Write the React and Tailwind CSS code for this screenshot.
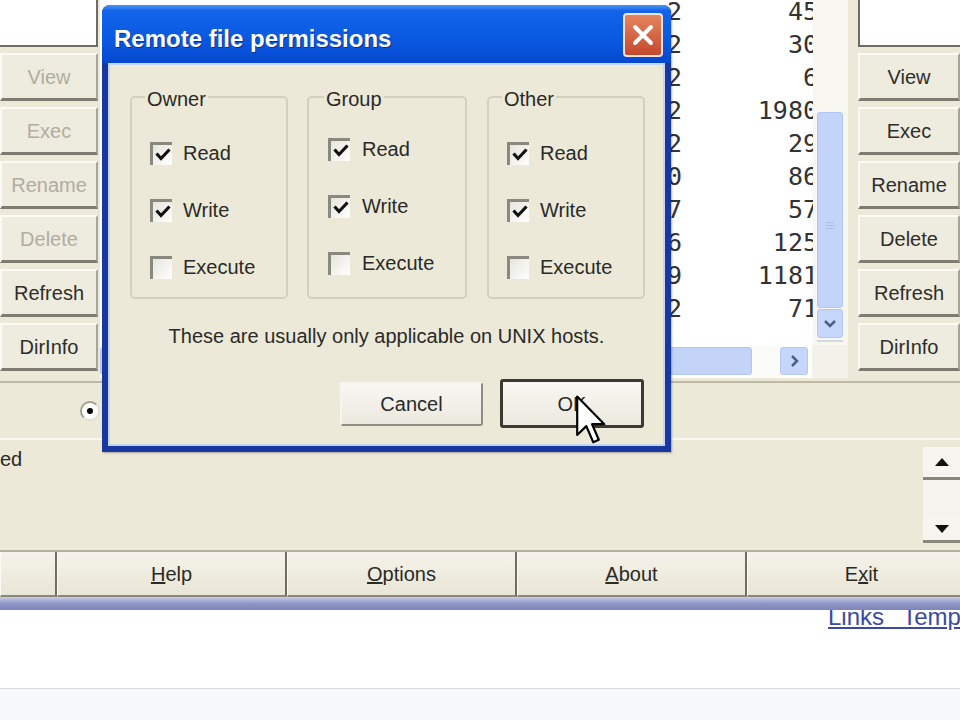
import React from "react";

function SideBtn({ label, disabled }) {
  return (
    <div
      className={
        "h-[48px] flex items-center justify-center bg-[#eeebdf] border-t-2 border-l-2 border-t-[#fbfaf4] border-l-[#fbfaf4] border-b-[3px] border-r-2 border-b-[#7e7c71] border-r-[#a7a598] text-[20px] " +
        (disabled ? "text-[#b1ae9f]" : "text-[#2e2e2a]")
      }
    >
      {label}
    </div>
  );
}

function Check({ checked }) {
  return (
    <div className="w-[22px] h-[23px] shrink-0 bg-linear-to-br from-[#e6e5dc] to-white border-t-[3px] border-l-[3px] border-t-[#8a897f] border-l-[#8a897f] flex items-center justify-center">
      {checked && (
        <svg width="16" height="14" viewBox="0 0 16 14">
          <path d="M1.5 5.5 L6 10.5 L14.5 1.5" fill="none" stroke="#111" strokeWidth="3.2" />
        </svg>
      )}
    </div>
  );
}

function Group({ title, pt, pl, gap, lm }) {
  const items = [
    ["Read", true],
    ["Write", true],
    ["Execute", false],
  ];
  return (
    <fieldset className="h-[214px] border-2 border-[#d3d0bf] rounded-[5px] p-0 m-0">
      <legend className={"px-[2px] text-[20px] leading-[24px] text-[#2a2a28] translate-y-[2px] " + lm}>{title}</legend>
      <div className={"flex flex-col gap-[33px] " + pt + " " + pl}>
        {items.map(([t, c]) => (
          <div key={t} className={"flex items-center h-[24px] " + gap}>
            <Check checked={c} />
            <span className="text-[20px] leading-[24px] text-[#2a2a28]">{t}</span>
          </div>
        ))}
      </div>
    </fieldset>
  );
}

const rows = [
  ["2", "45"],
  ["2", "30"],
  ["2", "6"],
  ["2", "1980"],
  ["2", "29"],
  ["0", "86"],
  ["7", "57"],
  ["6", "125"],
  ["9", "1181"],
  ["2", "71"],
  ["", ""],
  ["", ""],
];

function BarBtn({ w, children }) {
  return (
    <div
      className={
        "h-full shrink-0 flex items-center justify-center bg-linear-to-b from-[#f5f3ea] to-[#e9e6d6] border-r-2 border-r-[#6f6d63] border-b-2 border-b-[#8a887c] border-l border-l-[#fbfaf3] text-[20px] text-[#2a2a28] " +
        w
      }
    >
      {children}
    </div>
  );
}

export default function App() {
  return (
    <div className="relative w-[960px] h-[720px] overflow-hidden bg-[#ece9d8] font-['Liberation_Sans',Arial,sans-serif]">
      {/* top region */}
      <div className="flex h-[381px] items-start">
        {/* left column */}
        <div className="w-[98px] shrink-0 flex flex-col gap-[6px]">
          <div className="h-[47px] bg-white border-b-2 border-r-2 border-[#6f6d63]" />
          <SideBtn label="View" disabled />
          <SideBtn label="Exec" disabled />
          <SideBtn label="Rename" disabled />
          <SideBtn label="Delete" disabled />
          <SideBtn label="Refresh" />
          <SideBtn label="DirInfo" />
        </div>

        {/* file list */}
        <div className="ml-[2px] w-[748px] h-[378px] flex flex-col bg-[#f3f2ea]">
          <div className="flex h-[345px]">
            <div className="flex-1 bg-white overflow-hidden">
              <div className="mt-[-5px] font-['DejaVu_Sans_Mono',monospace] text-[25px] text-[#333] translate-x-[5px]">
                {rows.map(([a, b], i) => (
                  <div key={i} className="flex h-[33px] leading-[33px]">
                    <div className="w-[577px] shrink-0 text-right">{a}</div>
                    <div className="flex-1 text-right">{b}</div>
                  </div>
                ))}
              </div>
            </div>
            <div className="w-[35px] shrink-0 flex flex-col pl-[4px] pr-[5px] bg-[#f7f6f1]">
              <div className="h-[112px]" />
              <div className="h-[196px] rounded-[3px] bg-[#c3d4f8] border border-[#b3c6f1] flex items-center justify-center">
                <div className="flex flex-col gap-[2px] mt-[30px]">
                  <div className="w-[8px] h-px bg-[#a9bde8]" />
                  <div className="w-[8px] h-px bg-[#a9bde8]" />
                  <div className="w-[8px] h-px bg-[#a9bde8]" />
                </div>
              </div>
              <div className="h-[29px] mt-[1px] rounded-[3px] bg-[#c6d7fb] border border-[#b5c8f2] flex items-center justify-center">
                <svg width="14" height="9" viewBox="0 0 14 9">
                  <path d="M2 2 L7 7 L12 2" fill="none" stroke="#4b5f8a" strokeWidth="2.5" />
                </svg>
              </div>
              <div className="h-[2px] mt-[2px] bg-[#d6d9e0]" />
            </div>
          </div>
          <div className="flex h-[33px] items-stretch">
            <div className="w-[652px] shrink-0 bg-white pt-[2px] pb-[3px]">
              <div className="h-full rounded-[3px] bg-[#c3d4f8] border border-[#b3c6f1]" />
            </div>
            <div className="w-[28px] shrink-0 bg-[#fbfbf8]" />
            <div className="w-[28px] shrink-0 bg-white pt-[2px] pb-[3px]">
              <div className="h-full rounded-[3px] bg-[#c6d7fb] border border-[#b5c8f2] flex items-center justify-center">
                <svg width="9" height="14" viewBox="0 0 9 14">
                  <path d="M2 2 L7 7 L2 12" fill="none" stroke="#4b5f8a" strokeWidth="2.5" />
                </svg>
              </div>
            </div>
            <div className="w-[4px] shrink-0 bg-white" />
            <div className="flex-1 bg-[#f3f2ea]" />
          </div>
        </div>

        {/* right column */}
        <div className="ml-[10px] w-[102px] shrink-0 flex flex-col gap-[6px]">
          <div className="h-[47px] bg-white border-b-2 border-l-2 border-[#6f6d63]" />
          <SideBtn label="View" />
          <SideBtn label="Exec" />
          <SideBtn label="Rename" />
          <SideBtn label="Delete" />
          <SideBtn label="Refresh" />
          <SideBtn label="DirInfo" />
        </div>
      </div>

      {/* mode row */}
      <div className="h-[59px] flex items-center border-t-2 border-t-[#bcb9a9] border-b-2 border-b-[#f8f7f1]">
        <div className="ml-[80px] w-[20px] h-[20px] rounded-full bg-white border-2 border-t-[#a09e92] border-l-[#a09e92] border-r-[#e2e0d6] border-b-[#e2e0d6] flex items-center justify-center">
          <div className="w-[6px] h-[6px] rounded-full bg-black" />
        </div>
      </div>

      {/* log */}
      <div className="h-[110px] flex">
        <div className="flex-1 pt-[6px] text-[20px] leading-[26px] text-[#2a2a28]">ed</div>
        <div className="w-[37px] flex flex-col pt-[7px]">
          <div className="h-[33px] bg-[#f6f5ef] border-b-[3px] border-b-[#8a887c] flex items-center justify-center">
            <svg width="14" height="8" viewBox="0 0 14 8">
              <path d="M7 0 L14 8 L0 8 Z" fill="#111" />
            </svg>
          </div>
          <div className="h-[37px] bg-[#f4f3ed]" />
          <div className="h-[26px] bg-[#f6f5ef] border-b-[3px] border-b-[#8a887c] flex items-center justify-center">
            <svg width="14" height="8" viewBox="0 0 14 8">
              <path d="M0 0 L14 0 L7 8 Z" fill="#111" />
            </svg>
          </div>
        </div>
      </div>

      {/* bottom button bar */}
      <div className="h-[47px] flex border-t-2 border-t-[#b3b0a2]">
        <BarBtn w="w-[57px]" />
        <BarBtn w="w-[230px]">
          <span><span className="underline">H</span>elp</span>
        </BarBtn>
        <BarBtn w="w-[230px]">
          <span><span className="underline">O</span>ptions</span>
        </BarBtn>
        <BarBtn w="w-[230px]">
          <span><span className="underline">A</span>bout</span>
        </BarBtn>
        <BarBtn w="w-[230px]">
          <span>E<span className="underline">x</span>it</span>
        </BarBtn>
      </div>

      {/* window edge band */}
      <div className="h-[13px] bg-linear-to-b from-[#c9cde6] via-[#8e96c6] to-[#7c85ba]" />

      {/* page beneath */}
      <div className="h-[78px] bg-white overflow-hidden">
        <div className="pl-[828px] mt-[-7px] text-[24px] leading-[28px] whitespace-nowrap text-[#3a4aa3] underline [word-spacing:12px]">
          Links Temp
        </div>
      </div>
      <div className="h-[32px] bg-[#f7f8fa] border-t border-t-[#d9d9d9]" />

      {/* dialog */}
      <div className="absolute left-[102px] top-[5px] w-[569px] h-[447px] rounded-t-[8px] bg-[#16389f] flex flex-col overflow-hidden shadow-[1px_1px_2px_rgba(0,0,0,0.3)]">
        <div className="h-[58px] shrink-0 flex items-start bg-[linear-gradient(180deg,#4a95f7_0%,#1464ea_10%,#0a5ae2_55%,#0548cf_100%)]">
          <div className="pl-[12px] pt-[20px] text-[24px] leading-[28px] font-bold text-white [text-shadow:1px_1px_0_#0b2f95]">
            Remote file permissions
          </div>
          <div className="ml-auto mr-[8px] mt-[8px] w-[40px] h-[44px] rounded-[4px] border-2 border-[#f3e3dc] bg-linear-to-b from-[#e58460] to-[#c4482b] flex items-center justify-center">
            <svg width="22" height="22" viewBox="0 0 22 22">
              <path d="M3 3 L19 19 M19 3 L3 19" stroke="#fff" strokeWidth="4" strokeLinecap="round" />
            </svg>
          </div>
        </div>
        <div className="flex-1 mx-[6px] mb-[6px] bg-[#ece9d8] border-2 border-[#c6d5f6] flex flex-col">
          <div className="flex pl-[20px] pt-[20px] gap-[19px]">
            <div className="w-[158px]">
              <Group title="Owner" pt="pt-[32px]" pl="pl-[18px]" gap="gap-[11px]" lm="ml-[13px]" />
            </div>
            <div className="w-[160px]">
              <Group title="Group" pt="pt-[28px]" pl="pl-[19px]" gap="gap-[12px]" lm="ml-[15px]" />
            </div>
            <div className="w-[158px] ml-[1px]">
              <Group title="Other" pt="pt-[32px]" pl="pl-[18px]" gap="gap-[11px]" lm="ml-[13px]" />
            </div>
          </div>
          <div className="mt-[25px] text-center text-[20px] leading-[24px] text-[#2a2a28]">
            These are usually only applicable on UNIX hosts.
          </div>
          <div className="mt-[31px] flex justify-end items-center pr-[19px] gap-[17px]">
            <div className="w-[143px] h-[44px] rounded-[3px] bg-linear-to-b from-[#f8f7f2] to-[#ebe9df] border-2 border-t-[#f6f5ef] border-l-[#f6f5ef] border-r-[#8f8d82] border-b-[#8f8d82] flex items-center justify-center text-[20px] text-[#2a2a28]">
              Cancel
            </div>
            <div className="w-[144px] h-[49px] rounded-[3px] bg-linear-to-b from-[#f8f7f2] to-[#ebe9df] border-[3px] border-[#3a3932] flex items-center justify-center text-[20px] text-[#2a2a28]">
              OK
            </div>
          </div>
        </div>
      </div>

      {/* mouse cursor */}
      <svg
        className="absolute left-[576px] top-[395px]"
        width="30"
        height="50"
        viewBox="0 0 12.5 20.5"
      >
        <path
          d="M0.5 0.5 V16.5 L4.3 12.8 L7.2 19.5 L9.5 18.5 L6.7 12 H11.8 Z"
          fill="#fff"
          stroke="#000"
          strokeWidth="0.9"
          strokeLinejoin="round"
        />
      </svg>
    </div>
  );
}
